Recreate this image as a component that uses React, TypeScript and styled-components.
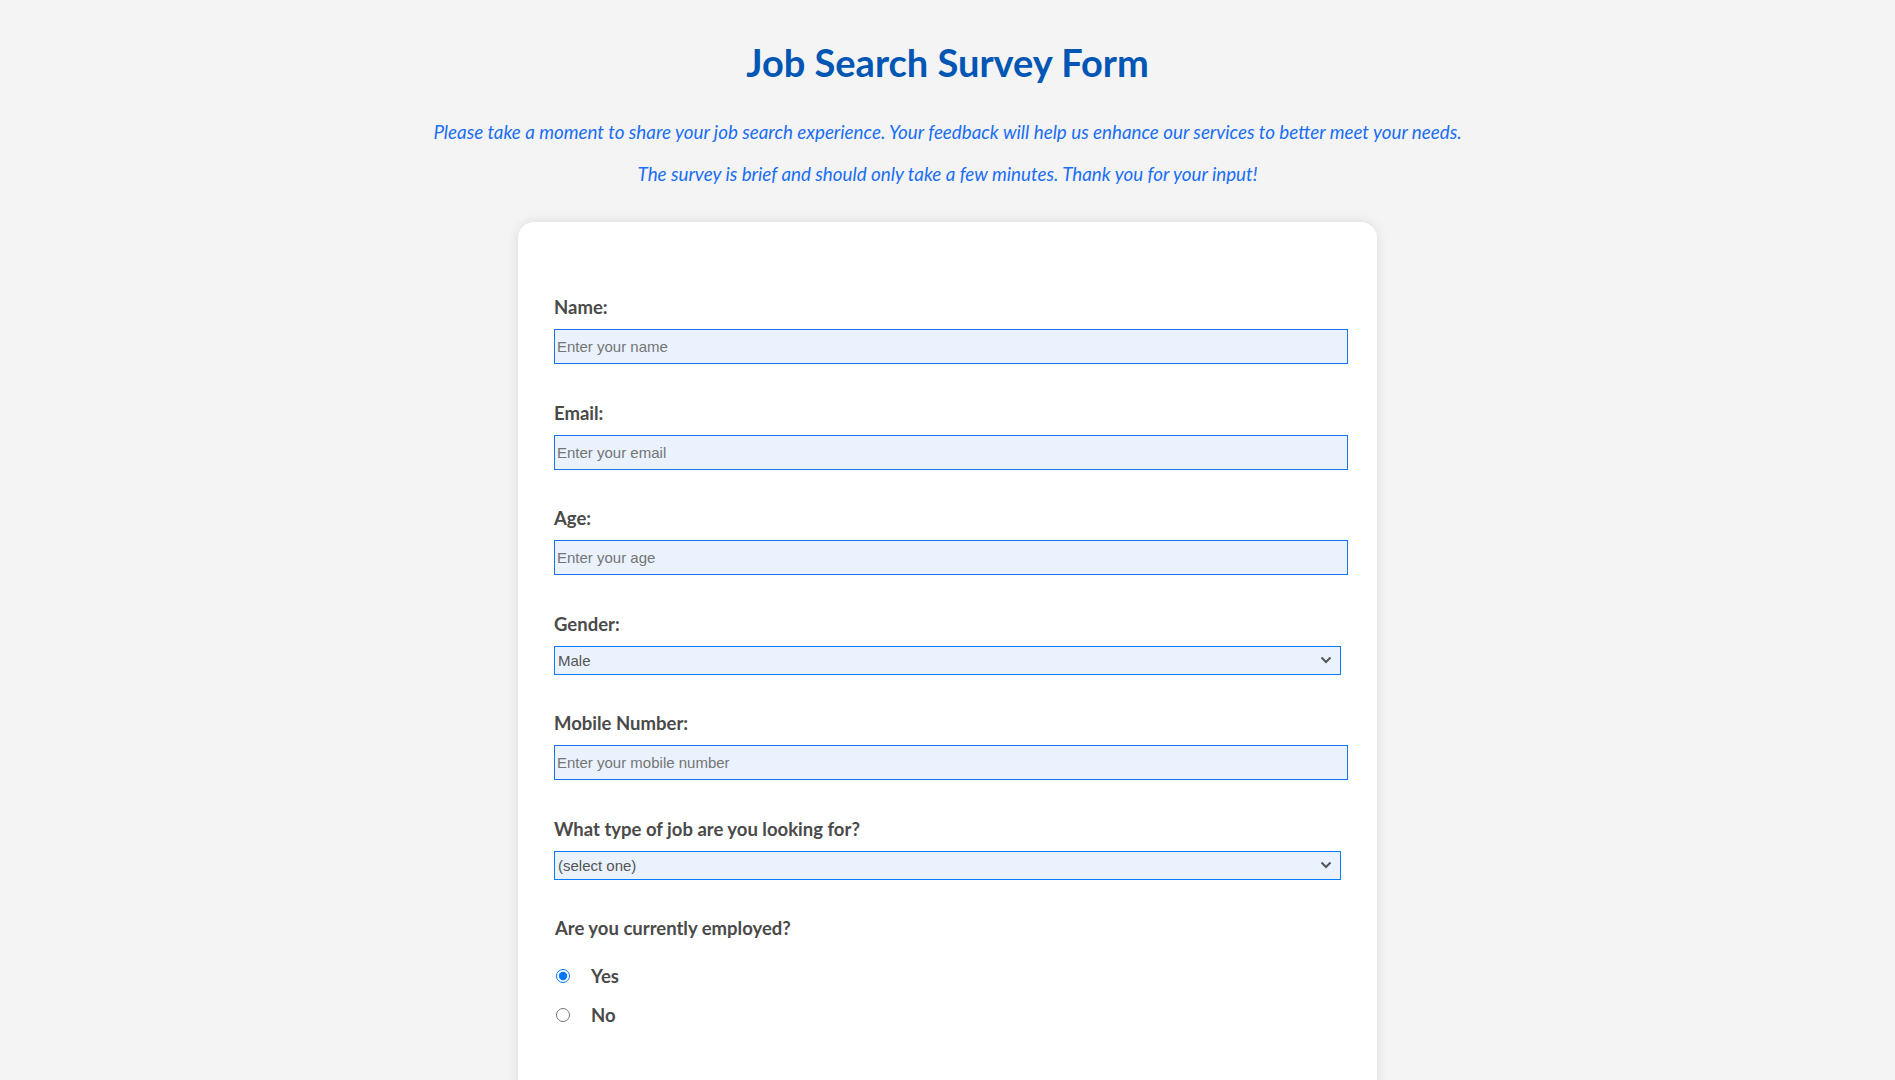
import React from "react";
import styled, { createGlobalStyle } from "styled-components";

const GlobalStyle = createGlobalStyle`
  html, body {
    margin: 0;
    padding: 0;
    background: #f4f4f4;
    font-family: "Lato", "Open Sans", sans-serif;
    color: #444;
  }
`;

const Page = styled.div`
  padding: 40px 20px 60px;
`;

const Title = styled.h1`
  margin: 0;
  text-align: center;
  font-size: 38px;
  line-height: 44px;
  font-weight: 700;
  color: #0056b3;
`;

const Intro = styled.p<{ $gap: number }>`
  margin: ${(p) => p.$gap}px 0 0;
  text-align: center;
  font-style: italic;
  font-size: 18.8px;
  line-height: 24px;
  color: #1a6ef5;
`;

const Card = styled.form`
  width: 787px;
  margin: 36px auto 0;
  padding: 73px 36px 120px;
  background: #fff;
  border-radius: 16px;
  box-shadow: 0 0 12px rgba(0, 0, 0, 0.1);
`;

const Group = styled.div<{ $top?: number; $last?: boolean }>`
  margin-top: ${(p) => p.$top ?? 0}px;
  margin-bottom: ${(p) => (p.$last ? 0 : 36.5)}px;
`;

const Label = styled.label`
  display: block;
  margin-bottom: 10px;
  font-size: 18.5px;
  line-height: 24px;
  font-weight: 700;
  color: #4a4a4a;
`;

const Input = styled.input`
  display: block;
  box-sizing: content-box;
  width: 100%;
  height: 33px;
  padding: 0 3px 0 2px;
  border: 1px solid #1a73e8;
  background: #e9f2fd;
  font-family: "Liberation Sans", Arial, sans-serif;
  font-size: 15px;
  color: #333;
  outline: none;

  &::placeholder {
    color: #757575;
  }
`;

const SelectWrap = styled.div`
  position: relative;
  width: 100%;
`;

const Select = styled.select`
  display: block;
  box-sizing: border-box;
  width: 100%;
  height: 29px;
  padding: 0 30px 0 3px;
  border: 1px solid #0a7aff;
  border-radius: 0;
  background: #e9f2fd;
  font-family: "Liberation Sans", Arial, sans-serif;
  font-size: 15px;
  color: #555;
  appearance: none;
  outline: none;
`;

const Chevron = styled.svg`
  position: absolute;
  right: 9px;
  top: 50%;
  width: 12px;
  height: 8px;
  margin-top: -4px;
  pointer-events: none;
`;

const Question = styled.div`
  padding-left: 1px;
  margin-top: 7px;
  font-size: 18.5px;
  line-height: 24px;
  font-weight: 700;
  color: #4a4a4a;
`;

const RadioList = styled.div`
  display: flex;
  flex-direction: column;
  margin-top: 16px;
`;

const RadioRow = styled.label`
  display: flex;
  align-items: center;
  height: 39px;
  font-size: 18.5px;
  font-weight: 700;
  color: #4a4a4a;
`;

const Radio = styled.input`
  width: 14px;
  height: 14px;
  margin: 0 21px 0 2px;
  accent-color: #0075ff;
`;

const Arrow = () => (
  <Chevron viewBox="0 0 12 8">
    <path d="M1.5 1.5 L6 6 L10.5 1.5" fill="none" stroke="#555" strokeWidth="2" />
  </Chevron>
);

const App: React.FC = () => {
  return (
    <Page>
      <GlobalStyle />
      <Title>Job Search Survey Form</Title>
      <Intro $gap={36}>
        Please take a moment to share your job search experience. Your feedback will help us enhance our services to better meet your needs.
      </Intro>
      <Intro $gap={18}>The survey is brief and should only take a few minutes. Thank you for your input!</Intro>

      <Card>
        <Group>
          <Label htmlFor="name">Name:</Label>
          <Input id="name" type="text" placeholder="Enter your name" />
        </Group>
        <Group>
          <Label htmlFor="email">Email:</Label>
          <Input id="email" type="email" placeholder="Enter your email" />
        </Group>
        <Group>
          <Label htmlFor="age">Age:</Label>
          <Input id="age" type="text" placeholder="Enter your age" />
        </Group>
        <Group $top={4}>
          <Label htmlFor="gender">Gender:</Label>
          <SelectWrap>
            <Select id="gender" defaultValue="male">
              <option value="male">Male</option>
              <option value="female">Female</option>
              <option value="other">Other</option>
            </Select>
            <Arrow />
          </SelectWrap>
        </Group>
        <Group $top={1}>
          <Label htmlFor="mobile">Mobile Number:</Label>
          <Input id="mobile" type="text" placeholder="Enter your mobile number" />
        </Group>
        <Group $top={5}>
          <Label htmlFor="jobtype">What type of job are you looking for?</Label>
          <SelectWrap>
            <Select id="jobtype" defaultValue="">
              <option value="">(select one)</option>
              <option value="full">Full-time</option>
              <option value="part">Part-time</option>
              <option value="contract">Contract</option>
              <option value="intern">Internship</option>
            </Select>
            <Arrow />
          </SelectWrap>
        </Group>
        <Group $last>
          <Question>Are you currently employed?</Question>
          <RadioList>
            <RadioRow>
              <Radio type="radio" name="employed" value="yes" defaultChecked />
              Yes
            </RadioRow>
            <RadioRow>
              <Radio type="radio" name="employed" value="no" />
              No
            </RadioRow>
          </RadioList>
        </Group>
      </Card>
    </Page>
  );
};

export default App;
